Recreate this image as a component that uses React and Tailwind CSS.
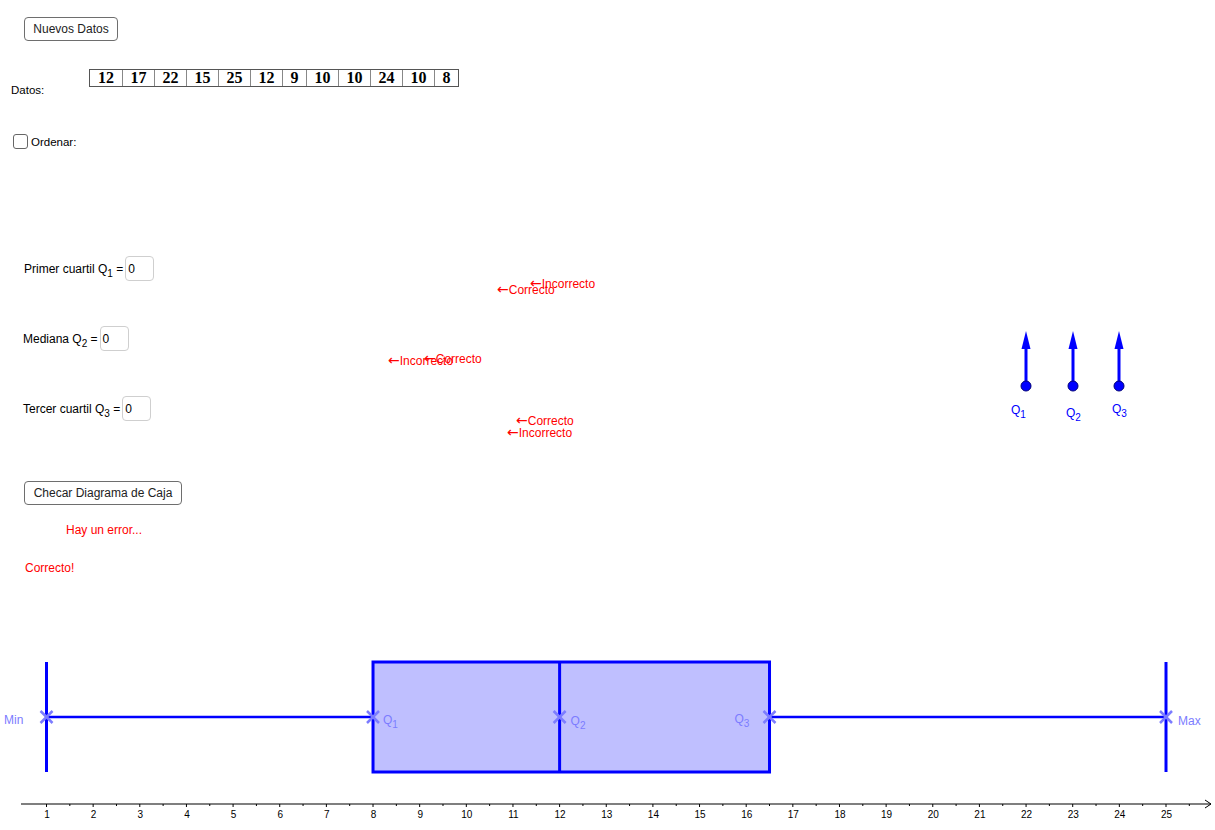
import React from "react";

/* -------------------- DATA -------------------- */

const datos = [12, 17, 22, 15, 25, 12, 9, 10, 10, 24, 10, 8];

const redLabels = [
  { text: "Incorrecto", x: 530, y: 276 },
  { text: "Correcto", x: 497, y: 282 },
  { text: "Incorrecto", x: 388, y: 353 },
  { text: "Correcto", x: 424, y: 351 },
  { text: "Correcto", x: 516, y: 413 },
  { text: "Incorrecto", x: 507, y: 425 },
];

// axis scale: value -> px
const px = (v) => 46.5 + (v - 1) * 46.646;

const FONT = "'Liberation Sans', Arial, sans-serif";

/* -------------------- SMALL PIECES -------------------- */

const Sub = ({ children }) => (
  <span className="relative top-[4px] text-[10px] leading-none">{children}</span>
);

const Entrada = () => (
  <div className="ml-[2px] flex h-[25px] w-[29px] items-center rounded-[4px] border border-[#cfcfcf] bg-white pl-[2px] text-[12px]">
    0
  </div>
);

const Boton = ({ children, className }) => (
  <button
    type="button"
    className={`flex h-[24px] items-center justify-center rounded-[4px] border border-[#6e6e6e] bg-white text-[12px] text-[#222] ${className}`}
  >
    {children}
  </button>
);

/* -------------------- ARROWS (Q1, Q2, Q3) -------------------- */

const Flechas = () => (
  <svg
    className="absolute left-[1000px] top-[320px]"
    width="140"
    height="110"
    fontFamily={FONT}
  >
    {[
      { x: 26, lx: 11, ly: 94, s: "1" },
      { x: 73, lx: 66, ly: 97, s: "2" },
      { x: 119, lx: 112, ly: 93, s: "3" },
    ].map((a) => (
      <g key={a.s}>
        <line x1={a.x} y1={66} x2={a.x} y2={26} stroke="#0000ff" strokeWidth="3" />
        <polygon points={`${a.x},11 ${a.x - 4.5},29 ${a.x + 4.5},29`} fill="#0000ff" />
        <circle cx={a.x} cy={66} r="5" fill="#0000ff" stroke="#00007a" strokeWidth="1" />
        <text x={a.lx} y={a.ly} fontSize="12" fill="#0000ff">
          Q
          <tspan fontSize="10" dy="4">
            {a.s}
          </tspan>
        </text>
      </g>
    ))}
  </svg>
);

/* -------------------- BOX PLOT -------------------- */

const Cruz = ({ x, y }) => (
  <g stroke="#7c7cff" strokeWidth="2.5">
    <line x1={x - 6} y1={y - 6} x2={x + 6} y2={y + 6} />
    <line x1={x - 6} y1={y + 6} x2={x + 6} y2={y - 6} />
  </g>
);

const DiagramaCaja = () => {
  const top = 22;
  const bottom = 132;
  const mid = 77;
  const axisY = 164;
  const q1 = px(8);
  const q2 = px(12);
  const q3 = px(16.5);
  const min = px(1);
  const max = px(25);

  const majors = Array.from({ length: 25 }, (_, i) => i + 1);
  const minors = Array.from({ length: 25 }, (_, i) => i + 1.5);

  return (
    <svg width="1215" height="190" className="block" fontFamily={FONT}>
      {/* whiskers */}
      <line x1={min} y1={mid} x2={q1} y2={mid} stroke="#0000ff" strokeWidth="2.5" />
      <line x1={q3} y1={mid} x2={max} y2={mid} stroke="#0000ff" strokeWidth="2.5" />
      <line x1={min} y1={top} x2={min} y2={bottom} stroke="#0000ff" strokeWidth="3" />
      <line x1={max} y1={top} x2={max} y2={bottom} stroke="#0000ff" strokeWidth="3" />

      {/* box */}
      <rect
        x={q1}
        y={top}
        width={q3 - q1}
        height={bottom - top}
        fill="#bfbfff"
        stroke="#0000ff"
        strokeWidth="3"
      />
      <line x1={q2} y1={top} x2={q2} y2={bottom} stroke="#0000ff" strokeWidth="3" />

      {/* markers */}
      {[min, q1, q2, q3, max].map((x) => (
        <Cruz key={x} x={x} y={mid} />
      ))}

      {/* labels */}
      <g fontSize="12" fill="#7c7cff">
        <text x="4" y="84">Min</text>
        <text x={q1 + 10} y="84">
          Q<tspan fontSize="10" dy="4">1</tspan>
        </text>
        <text x={q2 + 11} y="85">
          Q<tspan fontSize="10" dy="4">2</tspan>
        </text>
        <text x={q3 - 35} y="83">
          Q<tspan fontSize="10" dy="4">3</tspan>
        </text>
        <text x="1178" y="85">Max</text>
      </g>

      {/* axis */}
      <line x1="21" y1={axisY} x2="1211" y2={axisY} stroke="#000" strokeWidth="1.2" />
      <polyline
        points={`1205,${axisY - 4} 1211,${axisY} 1205,${axisY + 4}`}
        fill="none"
        stroke="#000"
        strokeWidth="1"
      />
      {majors.map((v) => (
        <line key={`M${v}`} x1={px(v)} y1={axisY} x2={px(v)} y2={axisY + 3} stroke="#000" />
      ))}
      {minors.map((v) => (
        <line key={`m${v}`} x1={px(v)} y1={axisY} x2={px(v)} y2={axisY + 2} stroke="#000" />
      ))}
      <g fontSize="10" fill="#000" textAnchor="middle">
        {majors.map((v) => (
          <text key={`t${v}`} x={px(v) + 0.5} y={axisY + 14}>
            {v}
          </text>
        ))}
      </g>
    </svg>
  );
};

/* -------------------- APP -------------------- */

export default function App() {
  return (
    <div
      className="relative h-[830px] w-[1215px] overflow-hidden bg-white text-[12px] leading-[14px] text-black"
      style={{ fontFamily: FONT }}
    >
      <div className="flex flex-col items-start">
        {/* Nuevos datos */}
        <Boton className="ml-[24px] mt-[17px] w-[94px]">Nuevos Datos</Boton>

        {/* Datos */}
        <div className="mt-[28px] flex items-start">
          <span className="ml-[11px] w-[78px] pt-[14px] text-[11.5px]">Datos:</span>
          <div className="flex h-[18px] border border-[#555] font-['Liberation_Serif',serif] text-[16px] font-bold leading-[16px]">
            {datos.map((d, i) => (
              <div
                key={i}
                className={`flex items-center justify-center border-[#888] ${
                  i > 0 ? "border-l" : ""
                } ${d > 9 ? "w-[32px]" : "w-[24px]"}`}
              >
                {d}
              </div>
            ))}
          </div>
        </div>

        {/* Ordenar */}
        <div className="ml-[13px] mt-[37px] flex items-center">
          <div className="h-[15px] w-[15px] rounded-[3px] border border-[#666] bg-white" />
          <span className="ml-[3px] text-[11.5px]">Ordenar:</span>
        </div>

        {/* Cuartiles */}
        <div className="ml-[24px] mt-[107px] flex items-center">
          <span>
            Primer cuartil Q<Sub>1</Sub> =
          </span>
          <Entrada />
        </div>
        <div className="ml-[23px] mt-[45px] flex items-center">
          <span>
            Mediana Q<Sub>2</Sub> =
          </span>
          <Entrada />
        </div>
        <div className="ml-[23px] mt-[45px] flex items-center">
          <span>
            Tercer cuartil Q<Sub>3</Sub> =
          </span>
          <Entrada />
        </div>

        {/* Checar */}
        <Boton className="ml-[24px] mt-[60px] w-[158px]">Checar Diagrama de Caja</Boton>
        <span className="ml-[66px] mt-[18px] text-[#ff0000]">Hay un error...</span>
        <span className="ml-[25px] mt-[24px] text-[#ff0000]">Correcto!</span>

        {/* Diagrama */}
        <div className="mt-[65px]">
          <DiagramaCaja />
        </div>
      </div>

      {/* free-canvas feedback labels (overlap as in the applet) */}
      {redLabels.map((l, i) => (
        <span
          key={i}
          className="absolute whitespace-nowrap text-[#ff0000]"
          style={{ left: l.x, top: l.y }}
        >
          <span className="font-['DejaVu_Sans',sans-serif] text-[14px] leading-none">←</span>
          {l.text}
        </span>
      ))}

      <Flechas />
    </div>
  );
}
